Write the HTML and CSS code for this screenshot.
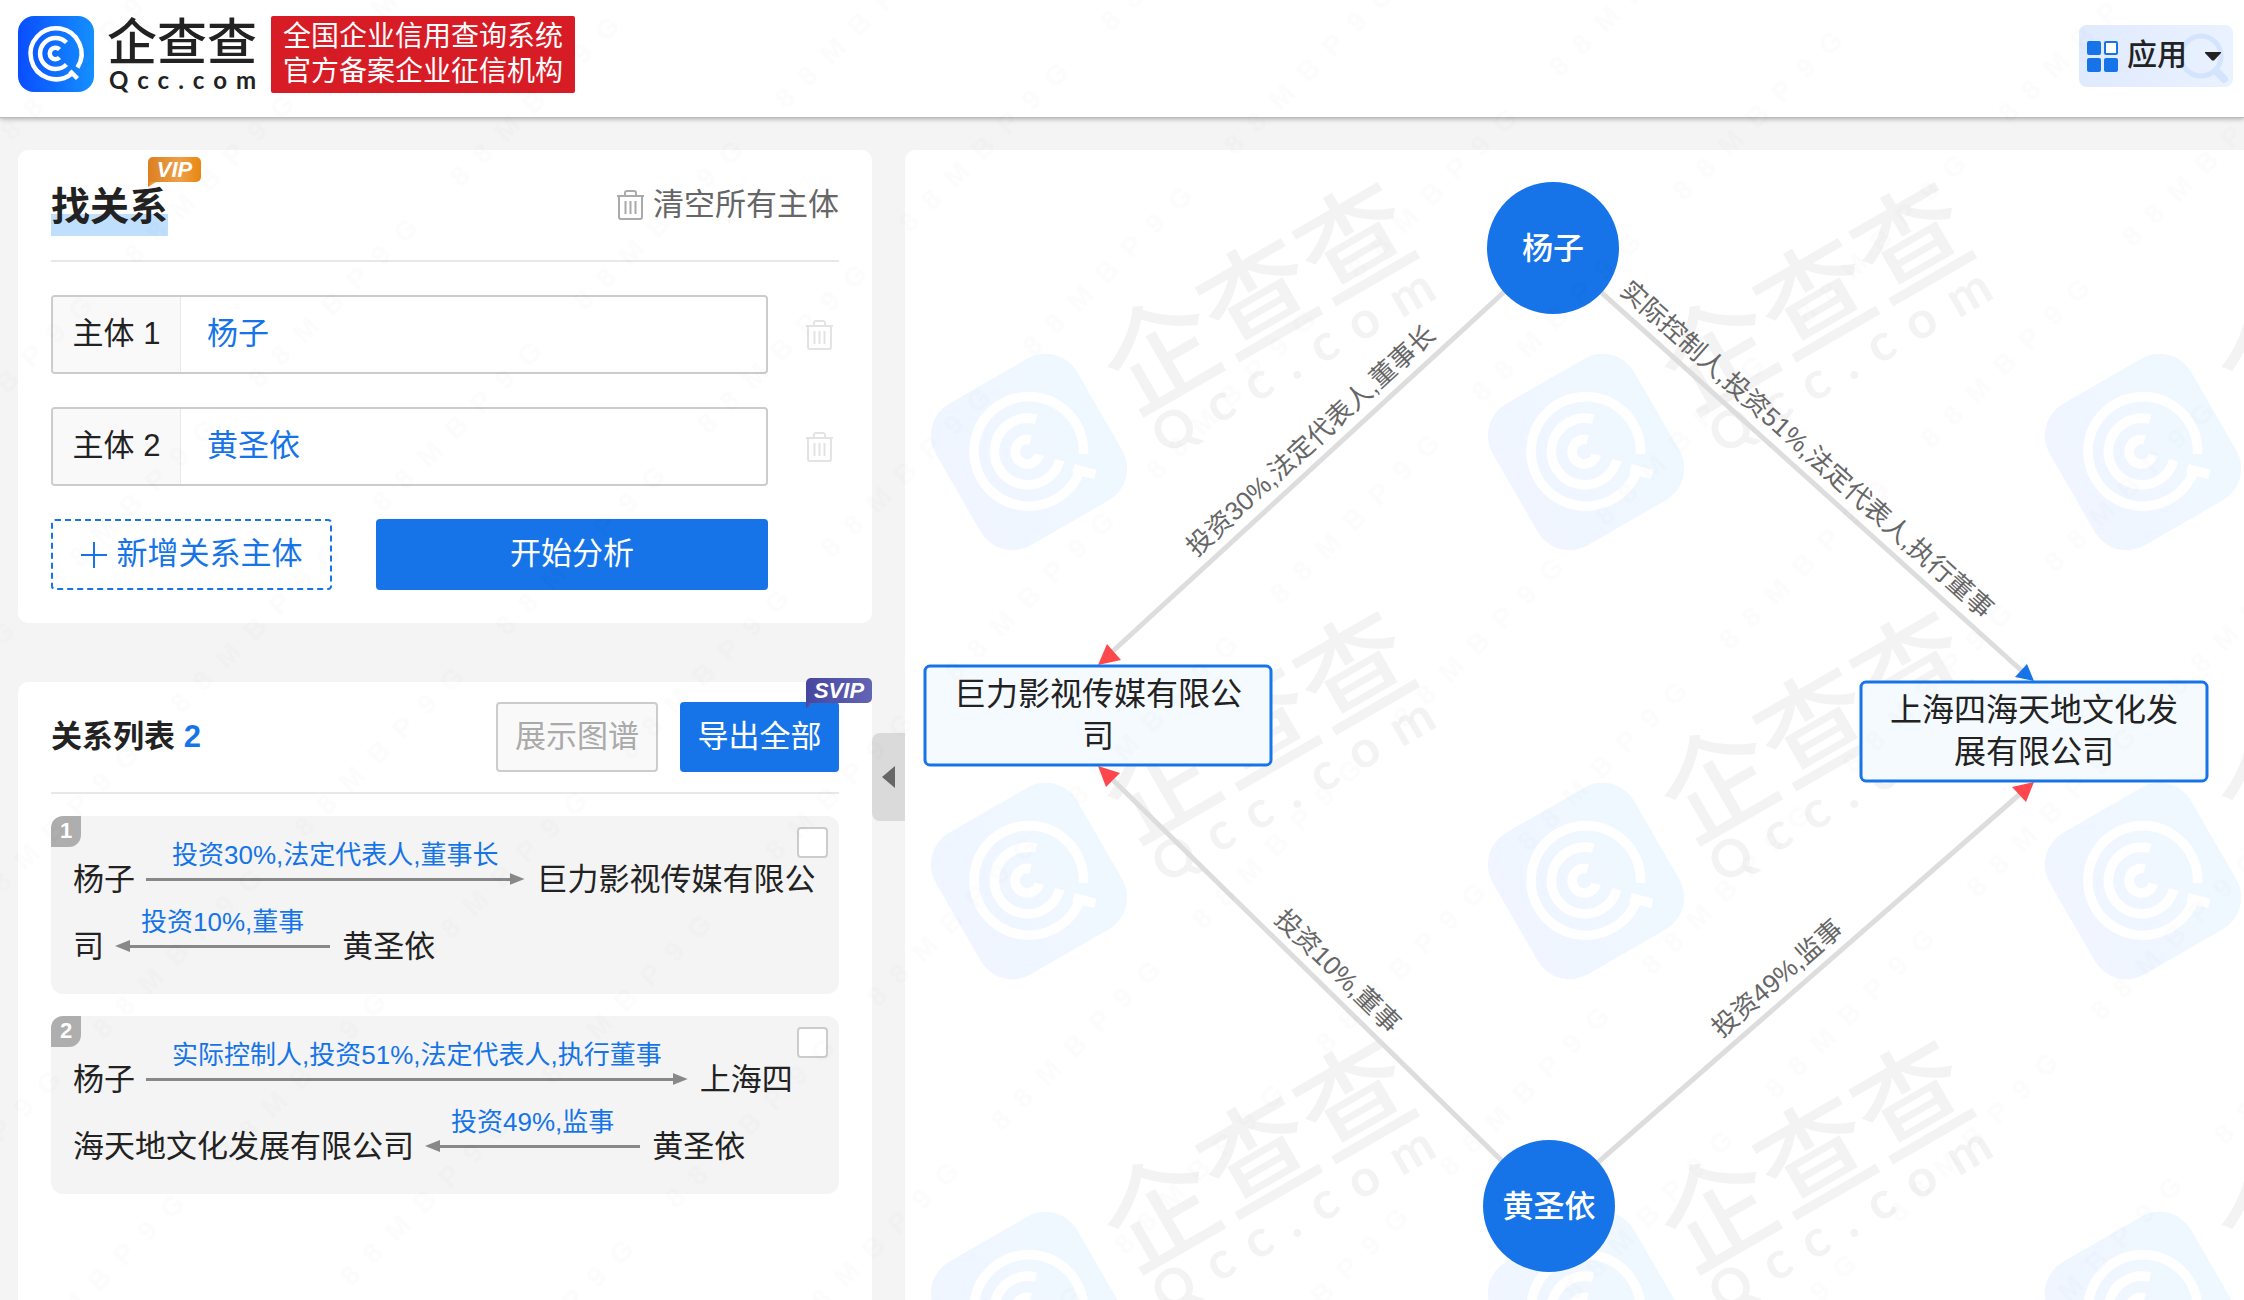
FILE: index.html
```html
<!DOCTYPE html>
<html lang="zh-CN">
<head>
<meta charset="utf-8">
<title>找关系 - 企查查</title>
<meta name="viewport" content="width=device-width, initial-scale=1">
<link rel="stylesheet" href="styles.css">
</head>
<body>
<svg class="defs" width="0" height="0" aria-hidden="true">
  <defs>
    <linearGradient id="logo-blue" x1="0" y1="0" x2="1" y2="0">
      <stop offset="0" stop-color="#0a4dff"/><stop offset="1" stop-color="#1490ff"/>
    </linearGradient>
    <symbol id="rings" viewBox="0 0 76 76" overflow="visible">
      <g fill="none" stroke="#fff" stroke-width="4.500">
        <path d="M59.500 51.500A25.500 25.500 0 1 0 53.500 58"/>
        <path d="M48.500 26.500A15.500 15.500 0 1 0 48.500 48.500"/>
        <path d="M41.500 33.500A5.700 5.700 0 1 0 41.500 41.500"/>
        <path d="M52 55L59.500 62.500"/>
      </g>
    </symbol>
    <symbol id="trash" viewBox="0 0 29 32">
      <g fill="none" stroke="currentColor" stroke-width="2">
        <path d="M1 7H28M9 7V4Q9 2 11 2H18Q20 2 20 4V7"/>
        <path d="M3 8V28Q3 30 5 30H24Q26 30 26 28V8M9.500 12V25M14.500 12V25M19.500 12V25"/>
      </g>
    </symbol>
  </defs>
</svg>

<header class="topbar">
  <a class="brand" href="#" aria-label="企查查">
    <svg class="brand-mark" viewBox="0 0 76 76"><rect width="76" height="76" rx="16" fill="url(#logo-blue)"/><use href="#rings" width="76" height="76"/></svg>
    <span class="brand-name"><span class="brand-cn">企查查</span><span class="brand-en">Qcc.com</span></span>
  </a>
  <p class="slogan">全国企业信用查询系统<br>官方备案企业征信机构</p>
  <button class="apps" type="button">
    <svg class="apps-lens" viewBox="0 0 50 54" aria-hidden="true"><circle cx="22" cy="24" r="20" fill="none" stroke="#d5e4fd" stroke-width="5"/><path d="M37 39L45 47" stroke="#d5e4fd" stroke-width="8" stroke-linecap="round"/></svg>
    <svg class="apps-grid" viewBox="0 0 31 31" aria-hidden="true"><g fill="#1674e8"><rect width="14" height="14" rx="2"/><rect y="17" width="14" height="14" rx="2"/><rect x="17" y="17" width="14" height="14" rx="2"/></g><rect x="18" y="1" width="12" height="12" rx="1" fill="#fff" stroke="#1674e8" stroke-width="2"/></svg>
    <span>应用</span>
    <svg class="apps-caret" viewBox="0 0 16 9" aria-hidden="true"><path d="M0 0H16V1L9 8.500H7L0 1Z" fill="#222"/></svg>
  </button>
</header>

<main class="workspace">
  <div class="sidebar">
    <section class="card">
      <div class="card-head">
        <h1 class="title">找关系<span class="tag tag-vip">VIP</span></h1>
        <button class="clear" type="button"><svg class="trash"><use href="#trash"/></svg>清空所有主体</button>
      </div>
      <form class="finder">
        <div class="row">
          <div class="field"><label for="s1">主体 1</label><input id="s1" type="text" value="杨子"></div>
          <button class="remove" type="button" aria-label="删除主体 1"><svg class="trash"><use href="#trash"/></svg></button>
        </div>
        <div class="row">
          <div class="field"><label for="s2">主体 2</label><input id="s2" type="text" value="黄圣依"></div>
          <button class="remove" type="button" aria-label="删除主体 2"><svg class="trash"><use href="#trash"/></svg></button>
        </div>
        <div class="actions">
          <button class="add" type="button"><svg class="plus" viewBox="0 0 26 26" aria-hidden="true"><path d="M13 0V26M0 13H26" stroke="currentColor" stroke-width="2"/></svg>新增关系主体</button>
          <button class="start" type="button">开始分析</button>
        </div>
      </form>
    </section>

    <section class="card results">
      <div class="card-head">
        <h2 class="subtitle">关系列表 <span class="count">2</span></h2>
        <div class="tools">
          <button class="ghost" type="button">展示图谱</button>
          <button class="export" type="button">导出全部<span class="tag tag-svip">SVIP</span></button>
        </div>
      </div>
      <ol class="paths">
        <li class="path">
          <span class="index">1</span>
          <input class="pick" type="checkbox" aria-label="选择关系 1">
          杨子<span class="link"><span class="link-text">投资30%,法定代表人,董事长</span><span class="arrow"></span></span>巨力影视传媒有限公<wbr>司<span class="link back"><span class="link-text">投资10%,董事</span><span class="arrow"></span></span>黄圣依
        </li>
        <li class="path">
          <span class="index">2</span>
          <input class="pick" type="checkbox" aria-label="选择关系 2">
          杨子<span class="link"><span class="link-text">实际控制人,投资51%,法定代表人,执行董事</span><span class="arrow"></span></span>上海四<wbr>海天地文化发展有限公司<span class="link back"><span class="link-text">投资49%,监事</span><span class="arrow"></span></span>黄圣依
        </li>
      </ol>
    </section>
  </div>

  <div class="gutter"><button class="collapse" type="button" aria-label="收起"></button></div>

  <section class="graph" aria-label="关系图谱">
    <svg class="graph-bg" aria-hidden="true">
      <defs>
        <linearGradient id="pale" x1="0" y1="0" x2="1" y2="0"><stop offset="0" stop-color="#f0f5ff"/><stop offset="1" stop-color="#eff8ff"/></linearGradient>
        <pattern id="brand-tile" width="557" height="429" patternUnits="userSpaceOnUse" patternTransform="translate(0 10)">
          <g transform="translate(124 292) rotate(-30) scale(2.150)">
            <rect x="-38" y="-38" width="76" height="76" rx="17" fill="url(#pale)"/>
            <use href="#rings" x="-38" y="-38" width="76" height="76"/>
            <text class="stamp-cn" x="50" y="10">企查查</text>
            <text class="stamp-en" x="54" y="33">Qcc.com</text>
          </g>
        </pattern>
      </defs>
      <rect width="100%" height="100%" fill="url(#brand-tile)"/>
    </svg>
    <svg class="graph-main" viewBox="0 0 1339 1150" preserveAspectRatio="xMidYMin meet">
      <g class="edges">
        <path d="M647 98L208 501"/><path d="M647 98L1117 521"/>
        <path d="M643 1056L208 630"/><path d="M643 1056L1115 644"/>
      </g>
      <path class="head-red" d="M193 515L202 494L216 510Z"/>
      <path class="head-blue" d="M1129 531L1122 514L1110 527Z"/>
      <path class="head-red" d="M193 616L215 623L201 637Z"/>
      <path class="head-red" d="M1129 632L1107 637L1121 652Z"/>
      <g class="edge-text">
        <text transform="translate(420 306) rotate(-42.500)" y="-12">投资30%,法定代表人,董事长</text>
        <text transform="translate(888 315) rotate(41.900)" y="-12">实际控制人,投资51%,法定代表人,执行董事</text>
        <text transform="translate(418 836) rotate(44.300)" y="-12">投资10%,董事</text>
        <text transform="translate(886 844) rotate(-41.100)" y="-12">投资49%,监事</text>
      </g>
      <g class="person">
        <circle cx="648" cy="98" r="66"/><text x="648" y="109">杨子</text>
        <circle cx="644" cy="1056" r="66"/><text x="644" y="1067">黄圣依</text>
      </g>
      <g class="company">
        <rect x="20" y="516" width="346" height="99" rx="5"/>
        <text x="193" y="555">巨力影视传媒有限公</text><text x="193" y="597">司</text>
        <rect x="956" y="532" width="346" height="99" rx="5"/>
        <text x="1129" y="571">上海四海天地文化发</text><text x="1129" y="613">展有限公司</text>
      </g>
    </svg>
  </section>
</main>

<svg class="watermark" aria-hidden="true">
  <defs>
    <pattern id="code-tile" width="285" height="175" patternUnits="userSpaceOnUse" patternTransform="translate(951 302) rotate(-45)">
      <text x="19" y="98">88MBP9G</text>
    </pattern>
  </defs>
  <rect width="100%" height="100%" fill="url(#code-tile)"/>
</svg>
</body>
</html>
```
FILE: styles.css
```css
:root {
  --blue: #1674e8;
  --ink: #222;
  --line: #e8e8e8;
  --border: #ccc;
  --page: #f4f4f4;
}
* { box-sizing: border-box; }
body {
  margin: 0;
  min-height: 100vh;
  display: flex;
  flex-direction: column;
  background: var(--page);
  color: var(--ink);
  font: 31px/1.3 "Liberation Sans", "Noto Sans CJK SC", sans-serif;
}
button, input { font: inherit; color: inherit; margin: 0; padding: 0; border: 0; background: none; }
button { cursor: pointer; }
h1, h2, p, ol { margin: 0; padding: 0; }
.defs { position: absolute; }

/* header */
.topbar {
  height: 118px;
  flex: none;
  display: flex;
  align-items: flex-start;
  padding: 16px 11px 0 18px;
  background: #fff;
  border-bottom: 1px solid #bbb;
  box-shadow: 0 1px 5px rgba(0, 0, 0, .3);
}
.brand { display: flex; gap: 13px; color: var(--ink); text-decoration: none; }
.brand-mark { width: 76px; height: 76px; }
.brand-name { display: flex; flex-direction: column; width: 153px; }
.brand-cn { font-size: 50px; line-height: 54px; font-weight: 500; }
.brand-en { font: 700 24px/20px Lato, sans-serif; letter-spacing: 9px; padding-left: 2px; white-space: nowrap; }
.slogan {
  margin-left: 11px;
  padding: 3px 12px 4px;
  background: #d71c26;
  border-radius: 2px;
  color: #fff;
  font-size: 28px;
  line-height: 35px;
}
.apps {
  position: relative;
  margin: 9px 0 0 auto;
  width: 154px;
  height: 62px;
  padding: 0 12px 0 8px;
  display: flex;
  align-items: center;
  border-radius: 8px;
  background: linear-gradient(90deg, #dfeafe, #eaf2ff);
  font-size: 30px;
  line-height: 36px;
  font-weight: 500;
}
.apps span { position: relative; margin-left: 9px; padding-bottom: 3px; }
.apps-grid { width: 31px; height: 31px; }
.apps-caret { position: relative; width: 16px; height: 9px; margin-left: auto; }
.apps-lens { position: absolute; right: 4px; top: 7px; width: 50px; height: 54px; }

/* layout */
.workspace { flex: 1; display: flex; padding: 32px 0 0 18px; }
.sidebar { flex: 0 0 854px; display: flex; flex-direction: column; gap: 59px; }
.gutter { flex: 0 0 33px; padding-top: 583px; }
.collapse {
  display: flex;
  align-items: center;
  justify-content: center;
  width: 33px;
  height: 88px;
  background: #dadada;
  border-radius: 8px 0 0 8px;
}
.collapse::before { content: ""; width: 13px; height: 22px; background: #666; clip-path: polygon(100% 0, 100% 100%, 0 50%); }
.card { background: #fff; border-radius: 10px; padding: 0 33px 33px; }
.results { flex: 1; border-radius: 10px 10px 0 0; }
.card-head {
  height: 112px;
  display: flex;
  align-items: center;
  justify-content: space-between;
  border-bottom: 2px solid var(--line);
}

/* finder */
.title {
  position: relative;
  height: 62px;
  font-size: 39px;
  line-height: 66px;
  font-weight: 700;
  background: linear-gradient(#bfdffd, #bfdffd) bottom / 100% 22px no-repeat;
}
.tag {
  position: absolute;
  color: #fff;
  font: italic 700 22px/25px "Liberation Sans", sans-serif;
  text-align: center;
  border-radius: 5px 5px 5px 0;
}
.tag::after {
  content: "";
  position: absolute;
  left: 0;
  top: 100%;
  width: 8px;
  height: 5px;
  background: inherit;
  clip-path: polygon(0 0, 100% 0, 0 100%);
}
.tag-vip { left: 97px; top: -17px; width: 53px; background: linear-gradient(90deg, #dc7f22, #eda046 60%, #e8870f); }
.tag-svip { right: -33px; top: -24px; width: 66px; background: linear-gradient(90deg, #4646a0, #6265b4); }
.clear { display: flex; align-items: center; gap: 8px; color: #666; }
.trash { display: block; width: 29px; height: 32px; }
.clear .trash { color: #aaa; }
.finder { display: flex; flex-direction: column; gap: 33px; padding-top: 33px; }
.row { display: flex; align-items: center; gap: 37px; padding-right: 5px; }
.field { flex: 1; display: flex; height: 79px; border: 2px solid var(--border); border-radius: 4px; overflow: hidden; }
.field label {
  flex: 0 0 128px;
  display: flex;
  align-items: center;
  justify-content: center;
  background: #f9f9f9;
  border-right: 1px solid var(--line);
}
.field input { flex: 1; min-width: 0; padding: 0 26px; color: var(--blue); }
.remove { color: #e3e3e3; }
.actions { display: flex; gap: 44px; padding-right: 71px; }
.actions button { height: 71px; border-radius: 4px; }
.add { width: 281px; display: flex; align-items: center; justify-content: center; gap: 10px; border: 2px dashed var(--blue); color: var(--blue); }
.plus { width: 26px; height: 26px; }
.start { flex: 1; background: var(--blue); color: #fff; }

/* result list */
.subtitle { font-size: 31px; font-weight: 700; }
.count { color: var(--blue); }
.tools { display: flex; gap: 22px; }
.tools button { height: 70px; border-radius: 4px; }
.ghost { width: 162px; border: 2px solid var(--border); background: #f9f9f9; color: #aaa; }
.export { position: relative; width: 159px; background: var(--blue); color: #fff; }
.paths { list-style: none; display: flex; flex-direction: column; gap: 22px; padding-top: 22px; }
.path {
  position: relative;
  padding: 30px 22px 14px;
  background: var(--page);
  border-radius: 12px;
  line-height: 67px;
  word-break: break-all;
}
.index {
  position: absolute;
  left: 0;
  top: 0;
  width: 30px;
  height: 31px;
  background: #aeaeae;
  border-radius: 12px 0;
  color: #fff;
  font-size: 22px;
  line-height: 29px;
  font-weight: 700;
  text-align: center;
}
.pick {
  appearance: none;
  position: absolute;
  right: 11px;
  top: 11px;
  width: 31px;
  height: 31px;
  border: 2px solid var(--border);
  border-radius: 4px;
  background: #fff;
}
.link {
  display: inline-flex;
  flex-direction: column;
  gap: 8px;
  height: 67px;
  margin: 0 12px 0 11px;
  vertical-align: top;
}
.link-text { padding: 0 26px; color: var(--blue); font-size: 26px; line-height: 18px; white-space: nowrap; }
.arrow { display: flex; align-items: center; height: 14px; }
.arrow::before { content: ""; flex: 1; height: 3px; background: #888; }
.arrow::after { content: ""; width: 15px; height: 12px; background: #888; clip-path: polygon(0 0, 100% 50%, 0 100%); }
.back .arrow { flex-direction: row-reverse; }
.back .arrow::after { clip-path: polygon(100% 0, 0 50%, 100% 100%); }

/* graph */
.graph { position: relative; flex: 1; min-width: 0; background: #fff; border-radius: 10px 0 0 0; overflow: hidden; }
.graph-bg { position: absolute; inset: 0; width: 100%; height: 100%; }
.graph-main { position: relative; display: block; width: 100%; }
.stamp-cn { font-size: 52px; font-weight: 500; fill: #f3f3f3; }
.stamp-en { font: 700 24px Lato, sans-serif; letter-spacing: 9px; fill: #f3f3f3; }
.edges { fill: none; stroke: #ddd; stroke-width: 5; }
.head-red { fill: #ff484e; }
.head-blue { fill: var(--blue); }
.edge-text { font-size: 26px; fill: #666; text-anchor: middle; }
.person { text-anchor: middle; font-size: 31px; font-weight: 500; fill: #fff; }
.person circle { fill: var(--blue); }
.company { text-anchor: middle; font-size: 32px; fill: var(--ink); }
.company rect { fill: #f5faff; stroke: var(--blue); stroke-width: 3; }

.watermark { position: fixed; inset: 0; width: 100%; height: 100%; pointer-events: none; }
.watermark text { font: 700 28px "Liberation Sans", sans-serif; letter-spacing: 16px; fill: #000; fill-opacity: .01; }
```
